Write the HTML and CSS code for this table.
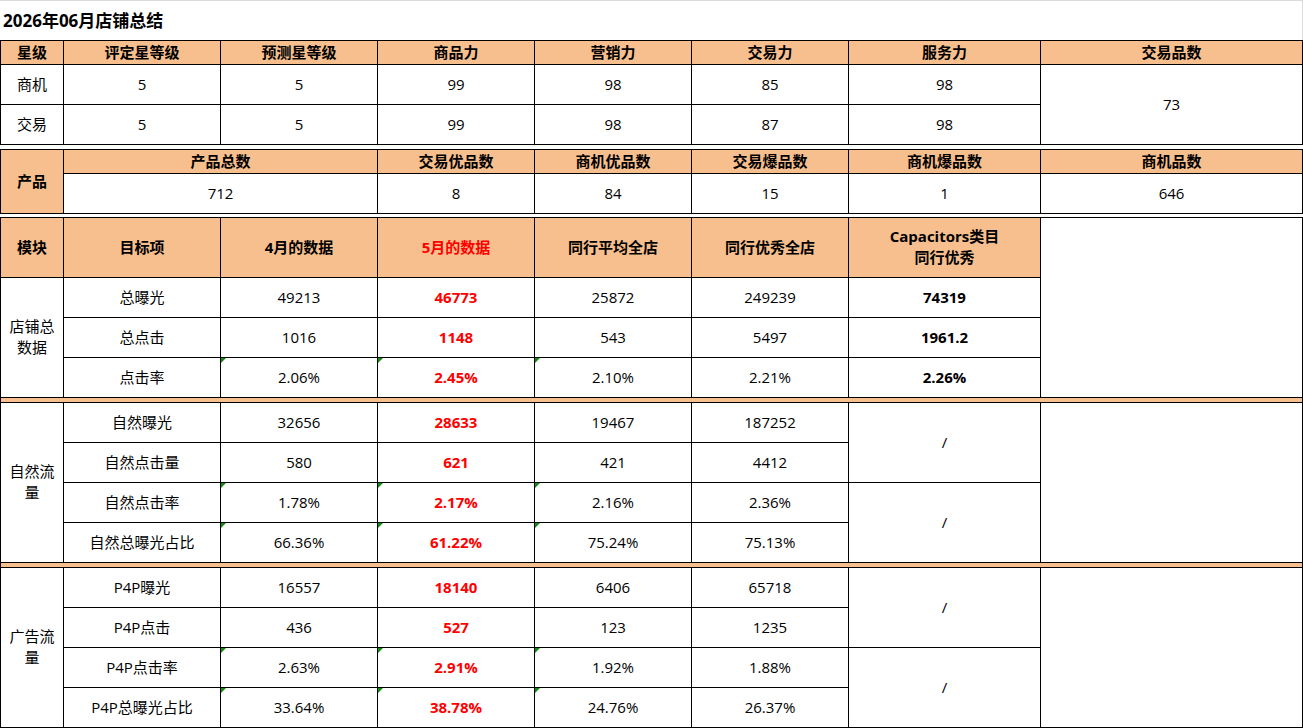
FILE: index.html
```html
<!DOCTYPE html>
<html lang="zh-CN">
<head>
<meta charset="utf-8">
<title>2026年06月店铺总结</title>
<link rel="stylesheet" href="styles.css">
</head>
<body>
<div class="sheet">
  <div class="title">2026年06月店铺总结</div>

  <div class="grid grid-star">
    <div class="c hd">星级</div>
    <div class="c hd">评定星等级</div>
    <div class="c hd">预测星等级</div>
    <div class="c hd">商品力</div>
    <div class="c hd">营销力</div>
    <div class="c hd">交易力</div>
    <div class="c hd">服务力</div>
    <div class="c hd">交易品数</div>

    <div class="c">商机</div>
    <div class="c">5</div>
    <div class="c">5</div>
    <div class="c">99</div>
    <div class="c">98</div>
    <div class="c">85</div>
    <div class="c">98</div>
    <div class="c rs2">73</div>

    <div class="c">交易</div>
    <div class="c">5</div>
    <div class="c">5</div>
    <div class="c">99</div>
    <div class="c">98</div>
    <div class="c">87</div>
    <div class="c">98</div>
  </div>

  <div class="grid grid-product">
    <div class="c hd rs2">产品</div>
    <div class="c hd cs2">产品总数</div>
    <div class="c hd">交易优品数</div>
    <div class="c hd">商机优品数</div>
    <div class="c hd">交易爆品数</div>
    <div class="c hd">商机爆品数</div>
    <div class="c hd">商机品数</div>

    <div class="c cs2">712</div>
    <div class="c">8</div>
    <div class="c">84</div>
    <div class="c">15</div>
    <div class="c">1</div>
    <div class="c">646</div>
  </div>

  <div class="grid grid-data">
    <div class="c hd">模块</div>
    <div class="c hd">目标项</div>
    <div class="c hd">4月的数据</div>
    <div class="c hd red">5月的数据</div>
    <div class="c hd">同行平均全店</div>
    <div class="c hd">同行优秀全店</div>
    <div class="c hd two">Capacitors类目<br>同行优秀</div>
    <div class="c rs4"></div>

    <div class="c rs3 two">店铺总<br>数据</div>
    <div class="c">总曝光</div>
    <div class="c">49213</div>
    <div class="c red b">46773</div>
    <div class="c">25872</div>
    <div class="c">249239</div>
    <div class="c b">74319</div>

    <div class="c">总点击</div>
    <div class="c">1016</div>
    <div class="c red b">1148</div>
    <div class="c">543</div>
    <div class="c">5497</div>
    <div class="c b">1961.2</div>

    <div class="c">点击率</div>
    <div class="c tri">2.06%</div>
    <div class="c tri red b">2.45%</div>
    <div class="c tri">2.10%</div>
    <div class="c">2.21%</div>
    <div class="c b">2.26%</div>

    <div class="sep"></div>

    <div class="c rs4 two">自然流<br>量</div>
    <div class="c">自然曝光</div>
    <div class="c">32656</div>
    <div class="c red b">28633</div>
    <div class="c">19467</div>
    <div class="c">187252</div>
    <div class="c rs2">/</div>
    <div class="c rs4"></div>

    <div class="c">自然点击量</div>
    <div class="c">580</div>
    <div class="c red b">621</div>
    <div class="c">421</div>
    <div class="c">4412</div>

    <div class="c">自然点击率</div>
    <div class="c tri">1.78%</div>
    <div class="c tri red b">2.17%</div>
    <div class="c tri">2.16%</div>
    <div class="c">2.36%</div>
    <div class="c rs2">/</div>

    <div class="c">自然总曝光占比</div>
    <div class="c tri">66.36%</div>
    <div class="c tri red b">61.22%</div>
    <div class="c tri">75.24%</div>
    <div class="c">75.13%</div>

    <div class="sep"></div>

    <div class="c rs4 two">广告流<br>量</div>
    <div class="c">P4P曝光</div>
    <div class="c">16557</div>
    <div class="c red b">18140</div>
    <div class="c">6406</div>
    <div class="c">65718</div>
    <div class="c rs2">/</div>
    <div class="c rs4"></div>

    <div class="c">P4P点击</div>
    <div class="c">436</div>
    <div class="c red b">527</div>
    <div class="c">123</div>
    <div class="c">1235</div>

    <div class="c">P4P点击率</div>
    <div class="c tri">2.63%</div>
    <div class="c tri red b">2.91%</div>
    <div class="c tri">1.92%</div>
    <div class="c">1.88%</div>
    <div class="c rs2">/</div>

    <div class="c">P4P总曝光占比</div>
    <div class="c tri">33.64%</div>
    <div class="c tri red b">38.78%</div>
    <div class="c tri">24.76%</div>
    <div class="c">26.37%</div>
  </div>
</div>
</body>
</html>
```

FILE: styles.css
```css
* {
  box-sizing: border-box;
}

html, body {
  margin: 0;
  padding: 0;
  background: #ffffff;
}

body {
  font-family: "Open Sans", "Noto Sans CJK SC", sans-serif;
  font-size: 15px;
  color: #000000;
}

.sheet {
  width: 1303px;
}

.title {
  height: 40px;
  border-top: 1px solid #dadada;
  border-right: 1px solid #dadada;
  padding-left: 3px;
  padding-bottom: 2px;
  display: flex;
  align-items: center;
  font-size: 17px;
  font-weight: 700;
}

.grid {
  display: grid;
  grid-template-columns: 62px 156px 156px 156px 156px 156px 191px 261px;
  gap: 1px;
  background: #000000;
  border: 1px solid #000000;
}

.grid-star {
  grid-template-rows: 23px 39px 39px;
  margin-bottom: 4px;
}

.grid-product {
  grid-template-rows: 23px 39px;
  margin-bottom: 3px;
}

.grid-data {
  grid-template-rows: 59px 39px 39px 39px 4px 39px 39px 39px 39px 4px 39px 39px 39px 39px;
}

.c {
  position: relative;
  background: #ffffff;
  display: flex;
  align-items: center;
  justify-content: center;
  text-align: center;
  white-space: nowrap;
  line-height: 20px;
  padding-bottom: 2px;
}

.hd {
  background: #f8bf8e;
  font-weight: 700;
}

.two {
  line-height: 21px;
}

.red {
  color: #ff0000;
}

.b {
  font-weight: 700;
}

.cs2 {
  grid-column: span 2;
}

.rs2 {
  grid-row: span 2;
}

.rs3 {
  grid-row: span 3;
}

.rs4 {
  grid-row: span 4;
}

.sep {
  grid-column: 1 / -1;
  background: #f8bf8e;
}

.tri::before {
  content: "";
  position: absolute;
  top: 0;
  left: 0;
  width: 0;
  height: 0;
  border-top: 5px solid #138a13;
  border-right: 5px solid transparent;
}
```
